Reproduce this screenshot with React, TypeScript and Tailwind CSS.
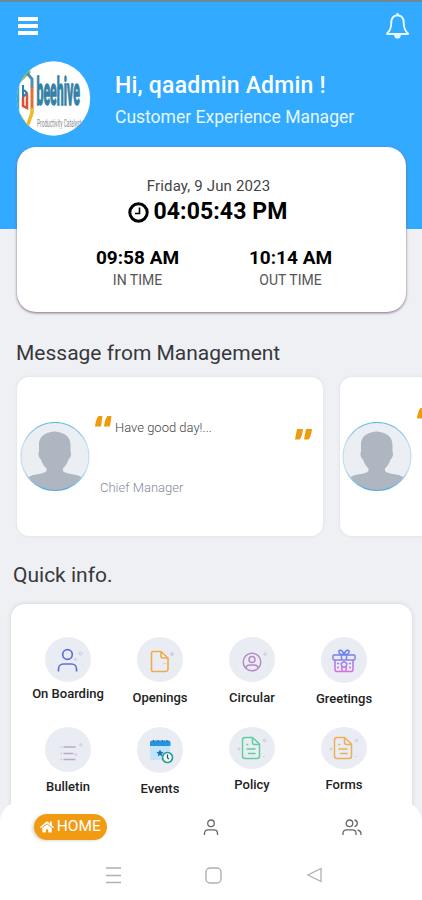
import type { ReactNode } from "react";
import { FaHome } from "react-icons/fa";

type QuickItem = {
  label: string;
  icon: ReactNode;
  circle: string;
  text: string;
};

function FileIcon({ color }: { color: string }) {
  return (
    <svg width="46" height="42" viewBox="0 0 46 42" fill="none" stroke={color} strokeWidth="1.5" strokeLinejoin="round" strokeLinecap="round">
      <path d="M16 10.500h7.500l7 6.500V29a2.500 2.500 0 0 1-2.500 2.500H16a2.500 2.500 0 0 1-2.500-2.500V13a2.500 2.500 0 0 1 2.500-2.500Z" />
      <path d="M23.500 10.700v4.800a2 2 0 0 0 2 2h4.800" />
      <path d="M18 17.500h.6M18 22h8M19.500 26.500h6.500" />
      <g stroke="#c3c8d4" strokeWidth="1">
        <circle cx="35.500" cy="13.500" r="1.200" />
        <path d="M9 22h2M10 21v2M34.500 29.500h.5" />
      </g>
    </svg>
  );
}

const items: QuickItem[] = [
  {
    label: "On Boarding",
    circle: "h-[45px]",
    text: "mt-[4px]",
    icon: (
      <svg width="46" height="45" viewBox="0 0 46 45" fill="none" stroke="#5f71d2" strokeWidth="1.700">
        <circle cx="22.500" cy="17.500" r="4.800" />
        <path d="M13.500 34.500v-2.500c0-3 2.200-5 5-5h8c2.800 0 5 2 5 5v2.500" />
        <g stroke="#bcc5e8" strokeWidth="1">
          <circle cx="35.500" cy="16.500" r="1.500" />
          <circle cx="30.500" cy="22.500" r="1" />
          <path d="M36.500 28h1" />
        </g>
      </svg>
    ),
  },
  {
    label: "Openings",
    circle: "h-[45px]",
    text: "mt-[8px]",
    icon: (
      <svg width="46" height="45" viewBox="0 0 46 45" fill="none" stroke="#f0ab4c" strokeWidth="1.600" strokeLinejoin="round">
        <path d="M16 14.500h8l7 6.500v11a2.500 2.500 0 0 1-2.500 2.500H16a1.500 1.500 0 0 1-1.500-1.500V16a1.500 1.500 0 0 1 1.500-1.500Z" />
        <path d="M24 14.500v5a1.500 1.500 0 0 0 1.500 1.500H31" />
        <g stroke="#bcc1d0" strokeWidth="1">
          <circle cx="35" cy="17" r="1.300" />
          <path d="M26 26.500h4" stroke="#e3d2c2" />
        </g>
      </svg>
    ),
  },
  {
    label: "Circular",
    circle: "h-[45px]",
    text: "mt-[8px] tracking-[0.1px]",
    icon: (
      <svg width="46" height="45" viewBox="0 0 46 45" fill="none" stroke="#b68bc5" strokeWidth="1.500">
        <circle cx="23" cy="25" r="8.800" />
        <circle cx="23" cy="22.500" r="3" />
        <path d="M17 31.500c0-2.300 1.800-3.500 4-3.500h4c2.200 0 4 1.200 4 3.500" />
        <circle cx="36" cy="17" r="1.200" stroke="#ccc9d9" strokeWidth="1" />
      </svg>
    ),
  },
  {
    label: "Greetings",
    circle: "h-[46px]",
    text: "mt-[8px]",
    icon: (
      <svg width="46" height="46" viewBox="0 0 46 46" fill="none" stroke="url(#gift)" strokeWidth="1.500" strokeLinejoin="round">
        <defs>
          <linearGradient id="gift" x1="0" y1="12" x2="0" y2="35" gradientUnits="userSpaceOnUse">
            <stop stopColor="#5b85e8" />
            <stop offset="0.500" stopColor="#9080e8" />
            <stop offset="1" stopColor="#df6be4" />
          </linearGradient>
        </defs>
        <path d="M13 18h20a1 1 0 0 1 1 1v3a1 1 0 0 1-1 1H13a1 1 0 0 1-1-1v-3a1 1 0 0 1 1-1Z" />
        <path d="M14 23v9.500a2 2 0 0 0 2 2h14a2 2 0 0 0 2-2V23M21 29v5.500M25 29v5.500M20.500 18v5M25.500 18v5" />
        <path d="M23 17c-2-5-6-4.500-5-1.500.5 1.500 2 2.500 5 1.500Zm0 0c2-5 6-4.500 5-1.500-.5 1.500-2 2.500-5 1.500Z" />
        <path d="M23 24.500l3 2.200-1.200 3.300h-3.600L20 26.700Z" />
        <path d="M16 26.500h2M28 26.500h2M16 30.500h2M28 30.500h2" />
      </svg>
    ),
  },
  {
    label: "Bulletin",
    circle: "h-[45px]",
    text: "mt-[7px]",
    icon: (
      <svg width="46" height="45" viewBox="0 0 46 45" fill="none" stroke="#bba9cb" strokeWidth="1.500">
        <path d="M18.500 20h12M18.500 26.500h10M18.500 32.500h12" />
        <path d="M15.500 20h1.500M15.500 26.500h1.500M15.500 32.500h1.500" stroke="#d1c7dc" />
        <circle cx="36" cy="18" r="1.200" stroke="#cfcddd" strokeWidth="1" />
        <circle cx="31" cy="27.500" r="1" stroke="#cfcddd" strokeWidth="1" />
      </svg>
    ),
  },
  {
    label: "Events",
    circle: "h-[46px]",
    text: "mt-[8px]",
    icon: (
      <svg width="46" height="46" viewBox="0 0 46 46" fill="none">
        <path d="M13 17h20v16H15a2 2 0 0 1-2-2Z" fill="#c2e5fd" />
        <path d="M15 13.500h16.500a2 2 0 0 1 2 2V19H13v-3.500a2 2 0 0 1 2-2Z" fill="#2794dc" />
        <path d="M16.500 13v2M21 13v2M25.500 13v2M30 13v2" stroke="#1870b9" />
        <path d="m23 22.500 1.100 2.300 2.500.3-1.800 1.700.4 2.500-2.200-1.200-2.200 1.200.4-2.500-1.800-1.700 2.500-.3Z" fill="#2371bb" />
        <circle cx="30.500" cy="30.500" r="5" fill="#f1fbfa" stroke="#299b91" strokeWidth="1.700" />
        <path d="M30.500 27.500v3.200l1.500 1.500" stroke="#364c61" strokeWidth="1.200" />
      </svg>
    ),
  },
  {
    label: "Policy",
    circle: "h-[42px]",
    text: "mt-[8px]",
    icon: <FileIcon color="#63cda0" />,
  },
  {
    label: "Forms",
    circle: "h-[42px]",
    text: "mt-[8px]",
    icon: <FileIcon color="#eeae58" />,
  },
];

function Avatar() {
  return (
    <svg className="shrink-0" width="70" height="70" viewBox="0 0 70 70">
      <defs>
        <clipPath id="face">
          <circle cx="35" cy="34.500" r="34" />
        </clipPath>
        <linearGradient id="ring" x1="0" y1="0" x2="0" y2="1">
          <stop stopColor="#5eb7df" />
          <stop offset="0.300" stopColor="#c5dce9" />
          <stop offset="0.700" stopColor="#c5dce9" />
          <stop offset="1" stopColor="#4faedb" />
        </linearGradient>
      </defs>
      <circle cx="35" cy="34.500" r="34" fill="#ebeff4" />
      <path
        clipPath="url(#face)"
        fill="#afb5c1"
        d="M34.500 9.500C29 10 19 12 19 23v7c-1.500 2 0 6 2 7.500 1 3.500 3 6.500 5.500 9V49c-2 3.500-12 2-18.500 6.500V70h54V55.500C55.500 51 45 52.500 43 49v-2.500c2.500-2.500 4.500-5.500 5.500-9 2-1.500 3.500-5.500 2-7.500v-7c0-11-10.500-13-16-13.500Z"
      />
      <circle cx="35" cy="34.500" r="34" fill="none" stroke="url(#ring)" strokeWidth="1.200" />
    </svg>
  );
}

function OpenQuote() {
  return (
    <svg className="shrink-0" width="17" height="11" viewBox="0 0 17 11" fill="#f09b0c">
      <path d="M3.500 0h4L6 10.500H0C.5 6 1.500 2.500 3.500 0Zm9 0h4L15 10.500H9c.5-4.500 1.500-8 3.500-10.500Z" />
    </svg>
  );
}

function CloseQuote() {
  return (
    <svg className="shrink-0" width="17" height="11" viewBox="0 0 17 11" fill="#f09b0c">
      <path d="M2 0h6C7.500 4.500 6.500 8.500 4.500 10.500H0Zm9 0h6c-.5 4.500-1.500 8.500-3.500 10.500H9Z" />
    </svg>
  );
}

function UserIcon() {
  return (
    <svg width="16" height="17" viewBox="0 0 16 17" fill="none" stroke="#686868" strokeWidth="1.300">
      <circle cx="8" cy="4.300" r="3.300" />
      <path d="M1.500 16v-1.500c0-2.200 1.500-3.700 3.500-3.700h6c2 0 3.500 1.500 3.500 3.700V16" />
    </svg>
  );
}

function UsersIcon() {
  return (
    <svg width="20" height="17" viewBox="0 0 20 17" fill="none" stroke="#686868" strokeWidth="1.300">
      <circle cx="7.500" cy="4.300" r="3.300" />
      <path d="M1 16v-1.500c0-2.200 1.500-3.700 3.500-3.700h6c2 0 3.500 1.500 3.500 3.700V16M12.500 1c3.700.7 3.700 6 0 6.700M15.500 11c2.200.5 3.500 1.700 3.500 4v1" />
    </svg>
  );
}

export default function App() {
  return (
    <div className="flex h-[900px] w-[422px] flex-col overflow-hidden bg-[#eff0f4] font-['Roboto',sans-serif] text-black">
      <header className="h-[229px] shrink-0 border-t-2 border-[#6e8898] bg-[#31aaff] text-white">
        <div className="flex h-[48px] items-center justify-between pr-[13px] pl-[18px]">
          <svg width="20" height="18" viewBox="0 0 20 18" fill="#fff">
            <path d="M0 0h20v4H0zM0 7h20v4H0zM0 14h20v4H0z" />
          </svg>
          <svg width="23" height="26" viewBox="0 0 23 26" fill="none" stroke="#e9faff" strokeWidth="1.900" strokeLinejoin="round">
            <path d="M10 2.500C6.500 3.500 5.300 6 5.300 9.500c0 6-1.300 8.500-4.300 11v.5h21v-.5c-3-2.500-4.300-5-4.300-11 0-3.500-1.200-6-4.700-7Z" />
            <path d="M9 22c.5 3.500 4.500 3.500 5 0Z" fill="#e9faff" />
            <path d="M11.500 0v2.500" />
          </svg>
        </div>

        <div className="flex items-start pt-[11px] pl-[16px]">
          <svg width="75" height="76" viewBox="0 0 75 76">
            <defs>
              <clipPath id="logo">
                <ellipse cx="37.500" cy="37.500" rx="36.700" ry="37.200" />
              </clipPath>
            </defs>
            <ellipse cx="37.500" cy="37.500" rx="36.700" ry="37.200" fill="#fff" />
            <g clipPath="url(#logo)" fill="none" strokeWidth="3">
              <path d="M2 22 14 10" stroke="#9fbb45" />
              <path d="M11 12 16 18v9" stroke="#4a90b0" />
              <path d="M16 26v22" stroke="#e0703a" />
              <path d="M16 47v5l-5 14" stroke="#f3b72c" strokeWidth="3.500" />
              <path d="M1 50 11 66" stroke="#e6c93a" />
              <path d="M2 22v28" stroke="#3aa9b7" strokeWidth="2.500" />
              <path d="M7 24v12l4-4-3-3" stroke="#2c7fae" strokeWidth="2" />
              <path d="M7 36v9l4 2V33" stroke="#e04f30" strokeWidth="2.500" />
            </g>
            <text transform="translate(20.500 44) scale(0.325 1)" fill="#3580a6" stroke="#3580a6" strokeWidth="1.500" fontFamily="Roboto" fontWeight="700" fontSize="38">beehive</text>
            <text transform="translate(21 66) scale(0.44 1)" fill="#85898c" fontFamily="Roboto" fontSize="11">Productivity Catalyst</text>
          </svg>
          <div className="pt-[10px] pl-[24px]">
            <h1 className="text-[23px] leading-[30px] font-medium tracking-[0.2px] whitespace-nowrap">Hi, qaadmin Admin !</h1>
            <p className="mt-[4px] text-[17.5px] leading-[24px] whitespace-nowrap text-[#e5f8ff]">Customer Experience Manager</p>
          </div>
        </div>
      </header>

      <section className="relative mx-auto -mt-[82px] h-[165px] w-[389px] shrink-0 rounded-[19px] bg-white pt-[29px] text-center shadow-[0_1px_3px_#846684]">
        <p className="pr-[5px] text-[15px] leading-[20px] tracking-[0.15px] text-[#444]">Friday, 9 Jun 2023</p>
        <div className="flex h-[32px] items-center justify-center gap-[5px] pr-[7px]">
          <svg width="21" height="21" viewBox="0 0 21 21" fill="none" stroke="#000">
            <circle cx="10.500" cy="10.500" r="8.700" strokeWidth="3" />
            <path d="M11.500 5.500v6H7" strokeWidth="1.600" />
          </svg>
          <span className="text-[23px] font-bold tracking-[0.1px]">04:05:43 PM</span>
        </div>
        <div className="mt-[18px] flex justify-center gap-[13px] pl-[6px]">
          <div className="w-[140px]">
            <p className="text-[19px] leading-[24px] font-bold">09:58 AM</p>
            <p className="text-[14px] leading-[21px] text-[#555]">IN TIME</p>
          </div>
          <div className="w-[140px]">
            <p className="text-[19px] leading-[24px] font-bold">10:14 AM</p>
            <p className="text-[14px] leading-[21px] text-[#555]">OUT TIME</p>
          </div>
        </div>
      </section>

      <h2 className="mt-[27px] shrink-0 pl-[16px] text-[21px] leading-[28px] text-[#36383c]">Message from Management</h2>

      <div className="mt-[10px] flex shrink-0 gap-[17px] pl-[17px]">
        <article className="flex h-[159px] w-[306px] shrink-0 items-center rounded-[12px] bg-white pl-[3px] shadow-[0_0_3px_#d7dae2]">
          <Avatar />
          <div className="h-full pt-[39px] pl-[5px]">
            <div className="flex gap-[3px]">
              <OpenQuote />
              <p className="mt-[2px] w-[177px] text-[13px] leading-[20px] font-light text-[#444]">Have good day!...</p>
              <div className="mt-[13px]">
                <CloseQuote />
              </div>
            </div>
            <p className="mt-[38px] pl-[5px] text-[13px] leading-[20px] font-light text-[#828b9a]">Chief Manager</p>
          </div>
        </article>
        <article className="flex h-[159px] w-[306px] shrink-0 items-center rounded-[12px] bg-white pl-[2px] shadow-[0_0_3px_#d7dae2]">
          <Avatar />
          <div className="h-full pt-[31px] pl-[5px]">
            <OpenQuote />
          </div>
        </article>
      </div>

      <h2 className="mt-[25px] shrink-0 pl-[13px] text-[21px] leading-[28px] text-[#36383c]">Quick info.</h2>

      <section className="mt-[15px] ml-[11px] grid h-[215px] w-[401px] shrink-0 grid-cols-[repeat(4,92px)] grid-rows-[90px_90px] rounded-t-[14px] bg-white pt-[33px] pl-[11px] shadow-[0_0_4px_#cfd1d8]">
        {items.map((item) => (
          <div key={item.label} className="flex flex-col items-center">
            <div className={`${item.circle} w-[46px] rounded-[50%] bg-[#eaecf3]`}>{item.icon}</div>
            <p className={`${item.text} text-[13px] leading-[16px] font-medium whitespace-nowrap text-[#222]`}>{item.label}</p>
          </div>
        ))}
      </section>

      <footer className="relative -mt-[17px] h-[98px] shrink-0 rounded-t-[20px] bg-white">
        <nav className="grid h-[50px] grid-cols-3 items-center">
          <div className="flex h-[26px] w-[73px] items-center justify-center gap-[3px] justify-self-center rounded-full bg-[#f19b12] text-white shadow-[-2px_1px_3px_#ddd]">
            <FaHome size={14} />
            <span className="text-[15.500px] leading-none">HOME</span>
          </div>
          <div className="justify-self-center">
            <UserIcon />
          </div>
          <div className="justify-self-center">
            <UsersIcon />
          </div>
        </nav>
        <div className="flex h-[46px] items-center pl-[106px] text-[#b0b0b0]">
          <svg width="15" height="17" viewBox="0 0 15 17" fill="none" stroke="currentColor" strokeWidth="1.400">
            <path d="M0 1h15M0 8.500h15M0 15.500h15" />
          </svg>
          <svg className="ml-[84px]" width="17" height="17" viewBox="0 0 17 17" fill="none" stroke="currentColor" strokeWidth="1.400">
            <rect x="1" y="1" width="15" height="15" rx="4" />
          </svg>
          <svg className="ml-[85px]" width="15" height="16" viewBox="0 0 15 16" fill="none" stroke="currentColor" strokeWidth="1.300">
            <path d="M14 1.500v13L1 8Z" />
          </svg>
        </div>
      </footer>
    </div>
  );
}
